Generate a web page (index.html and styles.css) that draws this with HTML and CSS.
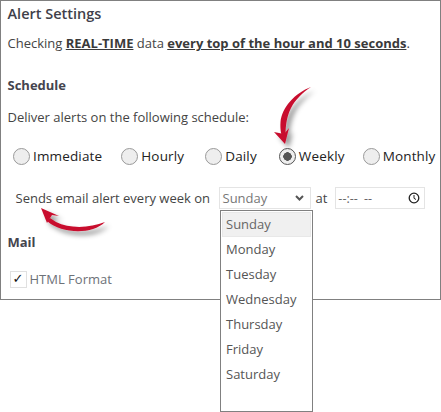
FILE: index.html
```html
<!DOCTYPE html>
<html lang="en">
<head>
    <meta charset="UTF-8">
    <title>Alert Settings</title>
    <link rel="stylesheet" href="styles.css">
</head>
<body>
    <div class="panel">
        <h1>Alert Settings</h1>
        <p class="intro">Checking <b>REAL-TIME</b> data <b>every top of the hour and 10 seconds</b>.</p>

        <h2 class="schedule-title">Schedule</h2>
        <p class="deliver">Deliver alerts on the following schedule:</p>

        <!-- Radio row -->
        <div class="radios">
            <label class="radio r-immediate"><span class="dot"></span>Immediate</label>
            <label class="radio r-hourly"><span class="dot"></span>Hourly</label>
            <label class="radio r-daily"><span class="dot"></span>Daily</label>
            <label class="radio r-weekly"><span class="dot on"></span>Weekly</label>
            <label class="radio"><span class="dot"></span>Monthly</label>
        </div>

        <!-- Send time row -->
        <div class="sends">
            <span class="sends-text">Sends email alert every week on</span>
            <div class="select">
                Sunday
                <svg class="chevron" width="9" height="6" viewBox="0 0 9 6"><path d="M1 1l3.500 3.500L8 1" fill="none" stroke="#555" stroke-width="2"/></svg>
            </div>
            <span class="at">at</span>
            <div class="time">
                --:-- --
                <svg class="clock" width="12" height="12" viewBox="0 0 12 12"><circle cx="6" cy="6" r="4.800" fill="none" stroke="#222" stroke-width="1.300"/><path d="M6 3v3.300l2 1.200" fill="none" stroke="#222" stroke-width="1"/></svg>
            </div>
        </div>

        <h2 class="mail-title">Mail</h2>
        <label class="check"><span class="box">✓</span>HTML Format</label>
    </div>

    <!-- Open dropdown -->
    <ul class="dropdown">
        <li class="active">Sunday</li>
        <li>Monday</li>
        <li>Tuesday</li>
        <li>Wednesday</li>
        <li>Thursday</li>
        <li>Friday</li>
        <li>Saturday</li>
    </ul>

    <!-- Red annotation arrows -->
    <svg class="arrows" width="441" height="412" viewBox="0 0 441 412">
        <defs>
            <filter id="arrowShadow" x="-50%" y="-50%" width="200%" height="200%">
                <feDropShadow dx="4" dy="4" stdDeviation="2.500" flood-color="#000" flood-opacity="0.4"/>
            </filter>
        </defs>
        <g filter="url(#arrowShadow)" fill="#c8102e">
            <path d="M311 87C295 93 282 107 280.500 122C280 129 281 135 283 138L286 138C285 130 286 118 291 108C295 100 303 92 311 87Z"/>
            <path d="M274 132L285 144L289 128L284 134Z"/>
            <path d="M105 222C90 228 70 229 56 222L50 218L47 221C62 234 92 235 105 222Z"/>
            <path d="M41 208L47 223L52 215L59 216Z"/>
        </g>
    </svg>
</body>
</html>
```

FILE: styles.css
```css
body {
    margin: 0;
    background-color: white;
    color: #444;
    font-family: "Open Sans", sans-serif;
    font-size: 13px;
}

.panel {
    box-sizing: border-box;
    width: 441px;
    height: 300px;
    padding: 3px 6px 0 6.500px;
    border: 1.500px solid #808080;
}

h1 {
    margin: 0;
    font-size: 14.500px;
    line-height: 20px;
    font-weight: 600;
    color: #3f3f4a;
}

h2 {
    margin: 0;
    font-size: 13px;
    line-height: 18px;
    font-weight: 700;
    color: #44444e;
}

p {
    margin: 0;
    line-height: 18px;
}

.intro {
    margin-top: 10px;
}

.intro b {
    text-decoration: underline;
    color: #3a3a3a;
}

.schedule-title {
    margin-top: 24px;
}

.deliver {
    margin-top: 14px;
}

.radios {
    display: flex;
    align-items: center;
    margin-top: 21px;
    margin-left: 5.500px;
    color: #222;
    font-size: 13.500px;
    letter-spacing: 0.150px;
    white-space: nowrap;
}

.radio {
    display: flex;
    align-items: center;
    gap: 3px;
    line-height: 18px;
}

.r-immediate { margin-right: 19px; }
.r-hourly { margin-right: 21px; }
.r-daily { margin-right: 22px; }
.r-weekly { margin-right: 18px; }

.dot {
    box-sizing: border-box;
    width: 17px;
    height: 17px;
    border: 1px solid #999;
    border-radius: 50%;
    background-color: #eee;
    flex: none;
}

.dot.on {
    border-color: #555;
    background: radial-gradient(circle, #555 0 4px, #eee 4.500px);
}

.sends {
    display: flex;
    align-items: center;
    margin-top: 22px;
    margin-left: 8px;
    height: 22px;
}

.sends-text {
    width: 203px;
    white-space: nowrap;
    color: #444;
}

.select {
    box-sizing: border-box;
    display: flex;
    justify-content: space-between;
    align-items: center;
    width: 92px;
    height: 22px;
    padding: 0 6px 0 3px;
    border: 1px solid #e4e4e4;
    color: #777;
}

.at {
    margin: 0 8px 0 5px;
    color: #444;
}

.time {
    box-sizing: border-box;
    display: flex;
    justify-content: space-between;
    align-items: center;
    width: 90px;
    height: 22px;
    padding: 0 4px 0 2px;
    border: 1px solid #e4e4e4;
    color: #666;
    font-size: 12.500px;
    word-spacing: 3px;
}

.mail-title {
    margin-top: 24px;
}

.check {
    display: flex;
    align-items: center;
    gap: 3px;
    margin-top: 19px;
    margin-left: 2px;
    color: #6d7178;
    line-height: 18px;
}

.box {
    box-sizing: border-box;
    display: flex;
    justify-content: center;
    align-items: center;
    width: 17px;
    height: 17px;
    border: 1px solid #e0e0e0;
    color: #111;
    font-family: "DejaVu Sans", sans-serif;
    font-size: 13px;
}

.dropdown {
    box-sizing: border-box;
    position: absolute;
    left: 220px;
    top: 210px;
    width: 93px;
    height: 202px;
    margin: 0;
    padding: 1px;
    list-style: none;
    background-color: white;
    border: 1.500px solid #808080;
    color: #555;
}

.dropdown li {
    height: 25px;
    padding-left: 4px;
    line-height: 25px;
}

.dropdown .active {
    background-color: #f0f0f0;
    border: 1px solid #e8e8e8;
    box-sizing: border-box;
    padding-left: 3px;
    line-height: 23px;
    color: #666;
}

.arrows {
    position: absolute;
    left: 0;
    top: 0;
    pointer-events: none;
}
```
